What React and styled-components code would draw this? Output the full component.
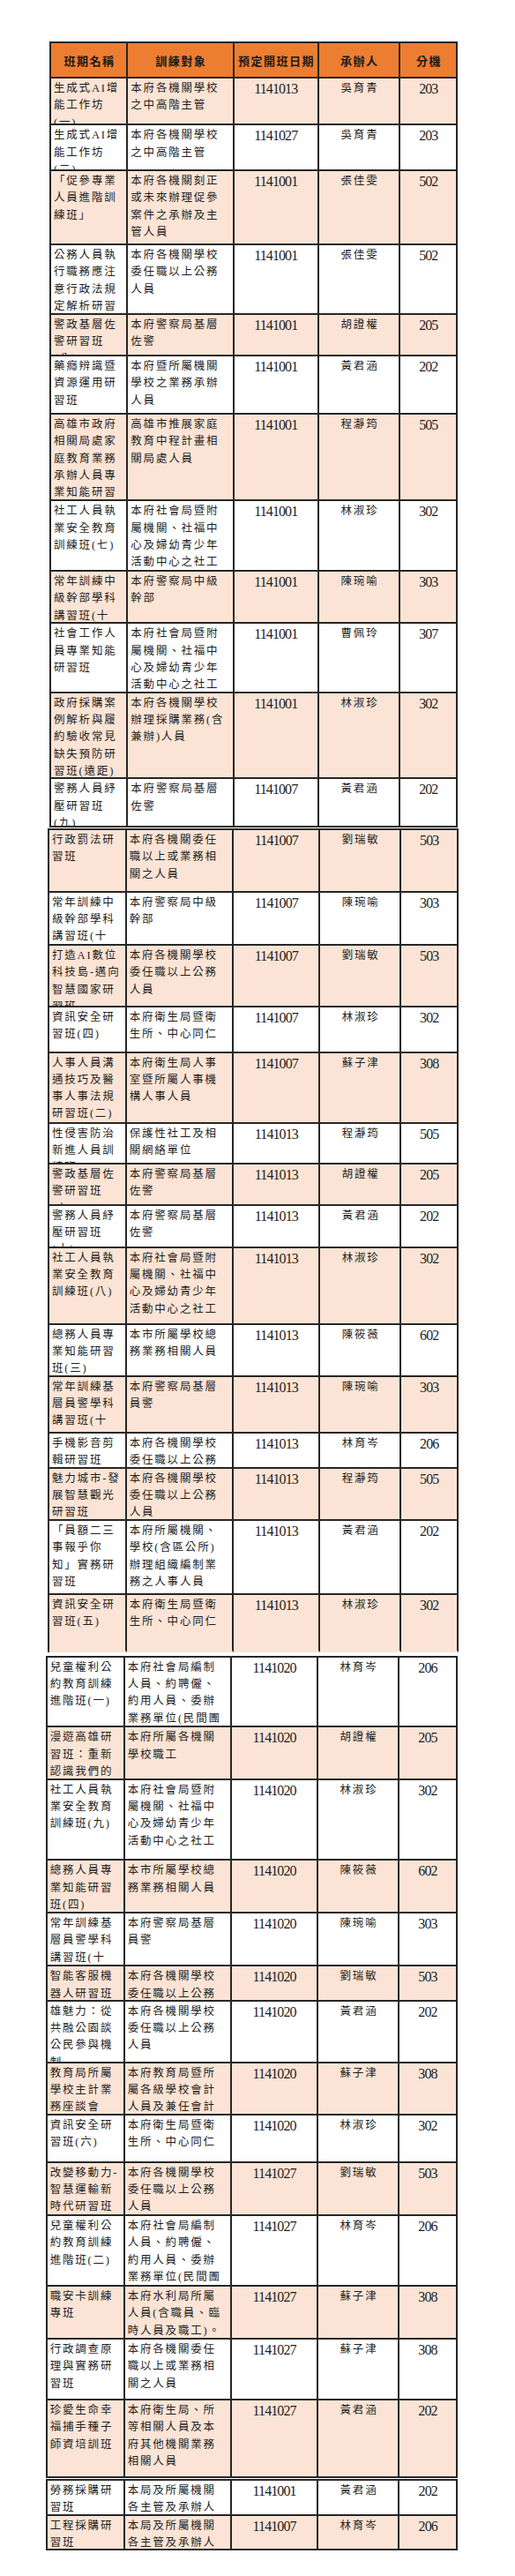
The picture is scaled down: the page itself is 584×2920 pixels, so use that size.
import styled, { createGlobalStyle } from "styled-components";

const GlobalStyle = createGlobalStyle`
  body {
    margin: 0;
    background: #fff;
  }
`;

const LINE = "#262626";

const Page = styled.div`
  width: 584px;
  padding: 47px 0 30px;
  font-family: "Liberation Serif", "Noto Sans CJK TC", serif;
  color: #1e1e1e;
`;

const Segment = styled.div`
  width: max-content;
  margin-left: ${(p) => p.$left}px;
  margin-top: ${(p) => p.$gap || 0}px;
  border-top: 2px solid ${LINE};
  border-left: 2px solid ${LINE};
`;

const Row = styled.div`
  display: grid;
  grid-template-columns: ${(p) => p.$cols};
  height: ${(p) => p.$h}px;
  background: ${(p) =>
    p.$tone === "head" ? "#ED7D31" : p.$tone === "pink" ? "#FBE4D5" : "#fff"};

  & > div {
    border-bottom-color: ${(p) => (p.$open ? "transparent" : LINE)};
  }
`;

const Cell = styled.div`
  box-sizing: border-box;
  min-width: 0;
  border-right: 2px solid ${LINE};
  border-bottom: 2px solid ${LINE};
  overflow: hidden;
  padding: 2px 0 0 3px;
  font-size: 12.5px;
  line-height: 19.3px;
  letter-spacing: 1.8px;
  white-space: nowrap;
`;

const CenterCell = styled(Cell)`
  text-align: center;
  padding-left: 1.8px;
  padding-right: 0;
`;

const NumCell = styled(Cell)`
  text-align: center;
  padding-left: 0;
  font-size: 16px;
  letter-spacing: -0.9px;
`;

const HeadCell = styled(Cell)`
  display: flex;
  align-items: center;
  justify-content: center;
  padding: 3px 0 0 1.5px;
  font-size: 13px;
  font-weight: bold;
  letter-spacing: 1.5px;
  color: #1a1a1a;
`;

const Line = styled.span`
  display: block;
`;

const HEAD = ["班期名稱", "訓練對象", "預定開班日期", "承辦人", "分機"];

const SOCIAL = ["本府社會局暨附", "屬機關、社福中", "心及婦幼青少年", "活動中心之社工"];
const POLICE_BASE = ["本府警察局基層", "佐警"];
const POLICE_MID = ["本府警察局中級", "幹部"];
const ALL_STAFF = ["本府各機關學校", "委任職以上公務", "人員"];
const HEALTH = ["本府衛生局暨衛", "生所、中心同仁"];
const GENERAL = ["本市所屬學校總", "務業務相關人員"];
const CHILD = ["本府社會局編制", "人員、約聘僱、", "約用人員、委辦", "業務單位(民間團"];
const PENALTY = ["本府各機關委任", "職以上或業務相", "關之人員"];
const BUREAU = ["本局及所屬機關", "各主管及承辦人"];

const segments = [
  {
    left: 56,
    gap: 0,
    head: true,
    cols: "87.3px 120.3px 96.3px 92.4px 65px",
    rows: [
      [53.4, ["生成式AI增", "能工作坊", "(一)"], ["本府各機關學校", "之中高階主管"], "1141013", "吳育青", "203"],
      [51.6, ["生成式AI增", "能工作坊", "(二)"], ["本府各機關學校", "之中高階主管"], "1141027", "吳育青", "203"],
      [84, ["「促參專業", "人員進階訓", "練班」"], ["本府各機關刻正", "或未來辦理促參", "案件之承辦及主", "管人員"], "1141001", "張佳雯", "502"],
      [78.7, ["公務人員執", "行職務應注", "意行政法規", "定解析研習"], ["本府各機關學校", "委任職以上公務", "人員"], "1141001", "張佳雯", "502"],
      [47.3, ["警政基層佐", "警研習班", "(八)"], POLICE_BASE, "1141001", "胡證權", "205"],
      [66, ["藥癮辨識暨", "資源運用研", "習班"], ["本府暨所屬機關", "學校之業務承辦", "人員"], "1141001", "黃君涵", "202"],
      [98.4, ["高雄市政府", "相關局處家", "庭教育業務", "承辦人員專", "業知能研習"], ["高雄市推展家庭", "教育中程計畫相", "關局處人員"], "1141001", "程瀞筠", "505"],
      [79.6, ["社工人員執", "業安全教育", "訓練班(七)"], SOCIAL, "1141001", "林淑珍", "302"],
      [59.4, ["常年訓練中", "級幹部學科", "講習班(十"], POLICE_MID, "1141001", "陳琬喻", "303"],
      [78.3, ["社會工作人", "員專業知能", "研習班"], SOCIAL, "1141001", "曹佩玲", "307"],
      [97.7, ["政府採購案", "例解析與履", "約驗收常見", "缺失預防研", "習班(遠距)"], ["本府各機關學校", "辦理採購業務(含", "兼辦)人員"], "1141001", "林淑珍", "302"],
      [54.6, ["警務人員紓", "壓研習班", "(九)"], POLICE_BASE, "1141007", "黃君涵", "202"],
    ],
  },
  {
    left: 54,
    gap: 1,
    cols: "87.7px 121.7px 98px 91.7px 65.3px",
    rows: [
      [70.7, ["行政罰法研", "習班"], PENALTY, "1141007", "劉瑞敏", "503"],
      [60.3, ["常年訓練中", "級幹部學科", "講習班(十"], POLICE_MID, "1141007", "陳琬喻", "303"],
      [70, ["打造AI數位", "科技島-邁向", "智慧國家研", "習班"], ALL_STAFF, "1141007", "劉瑞敏", "503"],
      [51.7, ["資訊安全研", "習班(四)"], HEALTH, "1141007", "林淑珍", "302"],
      [80, ["人事人員溝", "通技巧及醫", "事人事法規", "研習班(二)"], ["本府衛生局人事", "室暨所屬人事機", "構人事人員"], "1141007", "蘇子津", "308"],
      [46.6, ["性侵害防治", "新進人員訓", "練班"], ["保護性社工及相", "關網絡單位"], "1141013", "程瀞筠", "505"],
      [46.7, ["警政基層佐", "警研習班", "(九)"], POLICE_BASE, "1141013", "胡證權", "205"],
      [48, ["警務人員紓", "壓研習班", "(十)"], POLICE_BASE, "1141013", "黃君涵", "202"],
      [86.7, ["社工人員執", "業安全教育", "訓練班(八)"], SOCIAL, "1141013", "林淑珍", "302"],
      [59.3, ["總務人員專", "業知能研習", "班(三)"], GENERAL, "1141013", "陳筱薇", "602"],
      [64, ["常年訓練基", "層員警學科", "講習班(十"], ["本府警察局基層", "員警"], "1141013", "陳琬喻", "303"],
      [40, ["手機影音剪", "輯研習班"], ["本府各機關學校", "委任職以上公務"], "1141013", "林育岑", "206"],
      [59.3, ["魅力城市-發", "展智慧觀光", "研習班"], ALL_STAFF, "1141013", "程瀞筠", "505"],
      [83.4, ["「員額二三", "事報乎你", "知」實務研", "習班"], ["本府所屬機關、", "學校(含區公所)", "辦理組織編制業", "務之人事人員"], "1141013", "黃君涵", "202"],
      [65.3, ["資訊安全研", "習班(五)"], HEALTH, "1141013", "林淑珍", "302"],
    ],
    openEnd: true,
  },
  {
    left: 51.7,
    gap: 4,
    cols: "88px 121.6px 97.7px 92.3px 65.4px",
    rows: [
      [79.6, ["兒童權利公", "約教育訓練", "進階班(一)"], CHILD, "1141020", "林育岑", "206"],
      [59.4, ["漫遊高雄研", "習班：重新", "認識我們的"], ["本府所屬各機關", "學校職工"], "1141020", "胡證權", "205"],
      [91.6, ["社工人員執", "業安全教育", "訓練班(九)"], SOCIAL, "1141020", "林淑珍", "302"],
      [59.7, ["總務人員專", "業知能研習", "班(四)"], GENERAL, "1141020", "陳筱薇", "602"],
      [60.3, ["常年訓練基", "層員警學科", "講習班(十"], ["本府警察局基層", "員警"], "1141020", "陳琬喻", "303"],
      [39.4, ["智能客服機", "器人研習班"], ["本府各機關學校", "委任職以上公務"], "1141020", "劉瑞敏", "503"],
      [70, ["雄魅力：從", "共融公園談", "公民參與機", "制"], ALL_STAFF, "1141020", "黃君涵", "202"],
      [59, ["教育局所屬", "學校主計業", "務座談會"], ["本府教育局暨所", "屬各級學校會計", "人員及兼任會計"], "1141020", "蘇子津", "308"],
      [54, ["資訊安全研", "習班(六)"], HEALTH, "1141020", "林淑珍", "302"],
      [60.3, ["改變移動力-", "智慧運輸新", "時代研習班"], ALL_STAFF, "1141027", "劉瑞敏", "503"],
      [80, ["兒童權利公", "約教育訓練", "進階班(二)"], CHILD, "1141027", "林育岑", "206"],
      [60, ["職安卡訓練", "專班"], ["本府水利局所屬", "人員(含職員、臨", "時人員及職工)。"], "1141027", "蘇子津", "308"],
      [69, ["行政調查原", "理與實務研", "習班"], PENALTY, "1141027", "蘇子津", "308"],
      [87.7, ["珍愛生命幸", "福捕手種子", "師資培訓班"], ["本府衛生局、所", "等相關人員及本", "府其他機關業務", "相關人員"], "1141027", "黃君涵", "202"],
    ],
  },
  {
    left: 51.7,
    gap: 1,
    cols: "88px 121.6px 97.7px 92.3px 66px",
    rows: [
      [40, ["勞務採購研", "習班"], BUREAU, "1141001", "黃君涵", "202"],
      [39.3, ["工程採購研", "習班"], BUREAU, "1141007", "林育岑", "206"],
    ],
  },
];

const Lines = ({ lines }) =>
  lines.map((text, i) => <Line key={i}>{text}</Line>);

export default function App() {
  let count = 0;

  return (
    <Page>
      <GlobalStyle />
      {segments.map((seg, si) => (
        <Segment key={si} $left={seg.left} $gap={seg.gap}>
          {seg.head && (
            <Row $cols={seg.cols} $h={40} $tone="head">
              {HEAD.map((label) => (
                <HeadCell key={label}>{label}</HeadCell>
              ))}
            </Row>
          )}
          {seg.rows.map(([h, name, target, date, person, ext], ri) => {
            count += 1;
            const tone = count % 2 === 1 ? "pink" : "white";
            const open = seg.openEnd && ri === seg.rows.length - 1;
            return (
              <Row key={ri} $cols={seg.cols} $h={h} $tone={tone} $open={open}>
                <Cell>
                  <Lines lines={name} />
                </Cell>
                <Cell>
                  <Lines lines={target} />
                </Cell>
                <NumCell>{date}</NumCell>
                <CenterCell>{person}</CenterCell>
                <NumCell>{ext}</NumCell>
              </Row>
            );
          })}
        </Segment>
      ))}
    </Page>
  );
}
